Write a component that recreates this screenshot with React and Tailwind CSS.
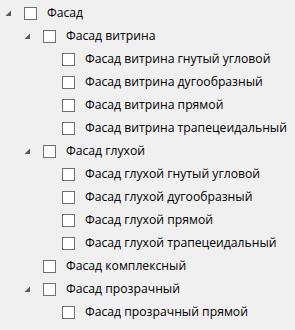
import React from "react";

const items = [
  { label: "Фасад", level: 0, expanded: true },
  { label: "Фасад витрина", level: 1, expanded: true },
  { label: "Фасад витрина гнутый угловой", level: 2 },
  { label: "Фасад витрина дугообразный", level: 2 },
  { label: "Фасад витрина прямой", level: 2 },
  { label: "Фасад витрина трапецеидальный", level: 2 },
  { label: "Фасад глухой", level: 1, expanded: true },
  { label: "Фасад глухой гнутый угловой", level: 2 },
  { label: "Фасад глухой дугообразный", level: 2 },
  { label: "Фасад глухой прямой", level: 2 },
  { label: "Фасад глухой трапецеидальный", level: 2 },
  { label: "Фасад комплексный", level: 1 },
  { label: "Фасад прозрачный", level: 1, expanded: true },
  { label: "Фасад прозрачный прямой", level: 2 },
];

const indent = ["pl-[5px]", "pl-[24px]", "pl-[43px]"];

const Expander = ({ show }) => (
  <div className="w-[19px] h-[13px] flex items-center shrink-0">
    {show && (
      <svg width="7" height="7" viewBox="0 0 7 7">
        <path d="M6 0.5 L6 6 L0.5 6 Z" fill="#595959" />
      </svg>
    )}
  </div>
);

const TreeRow = ({ item }) => (
  <div className={`h-[23px] flex items-center ${indent[item.level]}`}>
    <Expander show={item.expanded} />
    <div className="w-[13px] h-[13px] border border-[#707070] bg-white shrink-0" />
    <span className="ml-[10px] text-[12.2px] text-black leading-none whitespace-nowrap">
      {item.label}
    </span>
  </div>
);

const App = () => {
  return (
    <div className="w-[295px] h-[330px] bg-[#f0f0f0] pt-[2px] overflow-hidden font-['Segoe_UI','Open_Sans','Noto_Sans',sans-serif]">
      {items.map((item, i) => (
        <TreeRow key={i} item={item} />
      ))}
    </div>
  );
};

export default App;
